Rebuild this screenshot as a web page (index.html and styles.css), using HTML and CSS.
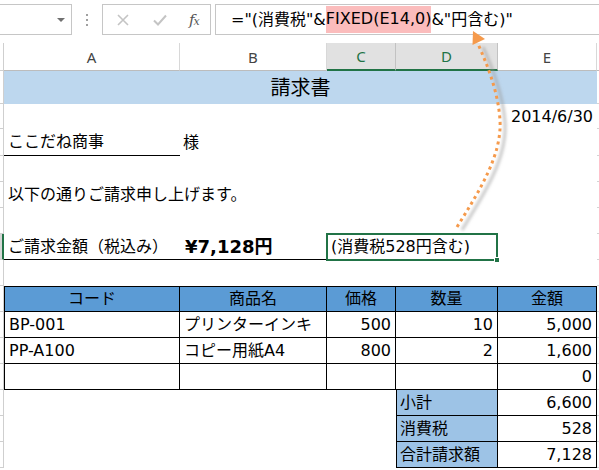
FILE: index.html
```html
<!DOCTYPE html>
<html lang="ja">
<head>
<meta charset="utf-8">
<title>請求書</title>
<link rel="stylesheet" href="styles.css">
</head>
<body>
<div class="app">
  <div class="fbar">
    <div class="namebox"><span class="caret"></span></div>
    <div class="grip"><i></i><i></i><i></i></div>
    <div class="btns">
      <svg class="ico-x" width="12" height="12" viewBox="0 0 12 12"><path d="M1 1 L11 11 M11 1 L1 11" stroke="#c4c4c4" stroke-width="1.6" fill="none"/></svg>
      <svg class="ico-ok" width="14" height="12" viewBox="0 0 14 12"><path d="M1 6.5 L5 10.5 L13 1.5" stroke="#c4c4c4" stroke-width="2" fill="none"/></svg>
      <span class="fx">f<span class="fx-x">x</span></span>
    </div>
    <div class="formula">="(消費税"&amp;<span class="hl">FIXED(E14,0)</span>&amp;"円含む)"</div>
  </div>

  <div class="colhdr">
    <div class="hcorner"></div>
    <div class="h w-a">A</div>
    <div class="h w-b">B</div>
    <div class="h w-c sel">C</div>
    <div class="h w-d sel">D</div>
    <div class="h w-e">E</div>
    <div class="hrest"></div>
  </div>

  <div class="sheet">
    <div class="row r-title"><div class="rh"></div><div class="cell w-ae title">請求書</div><div class="rt"></div></div>
    <div class="row r-date"><div class="rh"></div><div class="cell w-ad"></div><div class="cell w-e right">2014/6/30</div><div class="rt"></div></div>
    <div class="row r-27"><div class="rh"></div><div class="cell w-a uline">ここだね商事</div><div class="cell w-b pl3">様</div><div class="cell w-ce"></div><div class="rt"></div></div>
    <div class="row"><div class="rh"></div><div class="cell w-ae"></div><div class="rt"></div></div>
    <div class="row"><div class="rh"></div><div class="cell w-ae">以下の通りご請求申し上げます。</div><div class="rt"></div></div>
    <div class="row"><div class="rh"></div><div class="cell w-ae"></div><div class="rt"></div></div>
    <div class="row"><div class="rh on"></div><div class="cell w-a uline">ご請求金額（税込み）</div><div class="cell w-b uline total">¥7,128円</div><div class="cell w-cd selcell">(消費税528円含む)<span class="selbox"><span class="handle"></span></span></div><div class="cell w-e"></div><div class="rt"></div></div>
    <div class="row"><div class="rh"></div><div class="cell w-ae"></div><div class="rt"></div></div>

    <div class="row thead"><div class="rh"></div><div class="cell w-a t tl center">コード</div><div class="cell w-b t center">商品名</div><div class="cell w-c t center">価格</div><div class="cell w-d t center">数量</div><div class="cell w-e t center">金額</div><div class="rt"></div></div>
    <div class="row"><div class="rh"></div><div class="cell w-a t tl">BP-001</div><div class="cell w-b t">プリンターインキ</div><div class="cell w-c t right">500</div><div class="cell w-d t right">10</div><div class="cell w-e t right">5,000</div><div class="rt"></div></div>
    <div class="row"><div class="rh"></div><div class="cell w-a t tl">PP-A100</div><div class="cell w-b t">コピー用紙A4</div><div class="cell w-c t right">800</div><div class="cell w-d t right">2</div><div class="cell w-e t right">1,600</div><div class="rt"></div></div>
    <div class="row"><div class="rh"></div><div class="cell w-a t tl"></div><div class="cell w-b t"></div><div class="cell w-c t"></div><div class="cell w-d t"></div><div class="cell w-e t right">0</div><div class="rt"></div></div>
    <div class="row"><div class="rh"></div><div class="cell w-ac"></div><div class="cell w-d t tl sum">小計</div><div class="cell w-e t right">6,600</div><div class="rt"></div></div>
    <div class="row"><div class="rh"></div><div class="cell w-ac"></div><div class="cell w-d t tl sum">消費税</div><div class="cell w-e t right">528</div><div class="rt"></div></div>
    <div class="row"><div class="rh"></div><div class="cell w-ac"></div><div class="cell w-d t tl sum">合計請求額</div><div class="cell w-e t right">7,128</div><div class="rt"></div></div>
  </div>

  <svg class="arrow" width="599" height="470" viewBox="0 0 599 470">
    <defs>
      <filter id="blur" x="-20%" y="-20%" width="140%" height="140%"><feGaussianBlur stdDeviation="1.6"/></filter>
    </defs>
    <path d="M462,230 C485,193 507,158 505,123 C503,93 491,65 483,47" stroke="#9a9a9a" stroke-opacity="0.55" stroke-width="3" fill="none" filter="url(#blur)"/>
    <path d="M457,227 C480,190 502,155 500,120 C498,90 486,62 478,44" stroke="#f59a4c" stroke-width="3" stroke-dasharray="3 3.6" fill="none"/>
    <polygon points="473,31 472.5,45 485,39" fill="#f59a4c"/>
  </svg>
</div>
</body>
</html>
```

FILE: styles.css
```css
html, body {
  margin: 0;
  padding: 0;
  background: #ffffff;
}
body {
  font-family: "DejaVu Sans", "Noto Sans CJK JP", sans-serif;
  font-size: 16px;
  color: #000;
  overflow: hidden;
}
.app {
  position: relative;
  width: 599px;
  height: 470px;
  overflow: hidden;
}

/* formula bar */
.fbar {
  display: flex;
  align-items: flex-start;
  height: 43px;
  padding-top: 4px;
  box-sizing: border-box;
  overflow: hidden;
}
.namebox {
  flex: none;
  width: 72px;
  height: 31px;
  box-sizing: border-box;
  border: 1px solid #c6c6c6;
  border-left: none;
  position: relative;
}
.caret {
  position: absolute;
  left: 57px;
  top: 13px;
  width: 0;
  height: 0;
  border-left: 4px solid transparent;
  border-right: 4px solid transparent;
  border-top: 4px solid #707070;
}
.grip {
  flex: none;
  width: 3px;
  margin-left: 14px;
  height: 31px;
  display: flex;
  flex-direction: column;
  justify-content: center;
  gap: 3px;
}
.grip i {
  display: block;
  width: 2px;
  height: 2px;
  background: #a0a0a0;
}
.btns {
  flex: none;
  margin-left: 13px;
  width: 109px;
  height: 31px;
  box-sizing: border-box;
  border: 1px solid #c6c6c6;
  display: flex;
  align-items: center;
  padding-left: 14px;
}
.ico-x { display: block; }
.ico-ok { display: block; margin-left: 24px; }
.fx {
  margin-left: 22px;
  font-family: "DejaVu Serif", "Liberation Serif", serif;
  font-style: italic;
  font-size: 15px;
  color: #555;
  letter-spacing: -1px;
}
.fx-x {
  font-size: 11px;
}
.formula {
  flex: none;
  margin-left: 4px;
  width: 420px;
  height: 31px;
  box-sizing: border-box;
  border: 1px solid #c6c6c6;
  padding-left: 15px;
  display: flex;
  align-items: center;
  white-space: nowrap;
  line-height: 16px;
}
.hl {
  background: #fbbcbc;
  padding: 5px 0 6px;
}

/* column headers */
.colhdr {
  display: flex;
  height: 28px;
  font-family: "Noto Sans", "DejaVu Sans", sans-serif;
  font-size: 15px;
  color: #444;
}
.hcorner {
  flex: none;
  width: 4px;
  box-sizing: border-box;
  border-right: 1px solid #cfcfcf;
  border-bottom: 1px solid #cfcfcf;
}
.h {
  flex: none;
  box-sizing: border-box;
  border-right: 1px solid #d8d8d8;
  border-bottom: 1px solid #bcbcbc;
  display: flex;
  align-items: center;
  justify-content: center;
}
.h.sel {
  background: #e1e1e1;
  color: #217346;
  border-bottom: 2px solid #217346;
  border-right-color: #c2c2c2;
}
.hrest {
  flex: 1;
  border-bottom: 1px solid #bcbcbc;
}

/* sheet */
.row {
  display: flex;
  height: 26px;
}
.r-title { height: 33px; }
.r-date { height: 25px; }
.r-27 { height: 27px; }
.rh {
  flex: none;
  width: 4px;
  box-sizing: border-box;
  border-right: 1px solid #cfcfcf;
  border-bottom: 1px solid #cfcfcf;
}
.rh.on {
  background: #d6d6d6;
  border-right: 2px solid #217346;
}
.rt {
  flex: 1;
  border-bottom: 1px solid #d4d4d4;
}
.cell {
  flex: none;
  box-sizing: border-box;
  display: flex;
  align-items: center;
  padding: 0 4px;
  white-space: nowrap;
  overflow: hidden;
  line-height: 16px;
}
.w-a { width: 176px; }
.w-b { width: 147px; }
.w-c { width: 69px; }
.w-d { width: 102px; }
.w-e { width: 99px; }
.w-ae { width: 593px; }
.w-ad { width: 494px; }
.w-ce { width: 270px; }
.w-cd { width: 171px; }
.w-ac { width: 392px; }

.title {
  background: #bdd7ee;
  justify-content: center;
  font-size: 20px;
  line-height: 20px;
}
.right { justify-content: flex-end; }
.center { justify-content: center; }
.pl3 { padding-left: 3px; }
.uline { border-bottom: 1px solid #000; }
.total {
  font-weight: bold;
  font-size: 18px;
  line-height: 18px;
  padding-left: 5px;
}
.selcell {
  overflow: visible;
  position: relative;
}
.selbox {
  position: absolute;
  left: -1px;
  top: -1px;
  right: 0;
  bottom: -1px;
  border: 2px solid #217346;
}
.handle {
  position: absolute;
  right: -4px;
  bottom: -4px;
  width: 6px;
  height: 6px;
  background: #217346;
  border: 1px solid #fff;
  box-sizing: border-box;
}

/* item table */
.t {
  border-right: 1px solid #000;
  border-bottom: 1px solid #000;
}
.t.tl { border-left: 1px solid #000; }
.thead .t {
  background: #5b9bd5;
  border-top: 1px solid #000;
}
.sum {
  background: #9dc3e6;
  padding-left: 3px;
}

.arrow {
  position: absolute;
  left: 0;
  top: 0;
  pointer-events: none;
}
```
